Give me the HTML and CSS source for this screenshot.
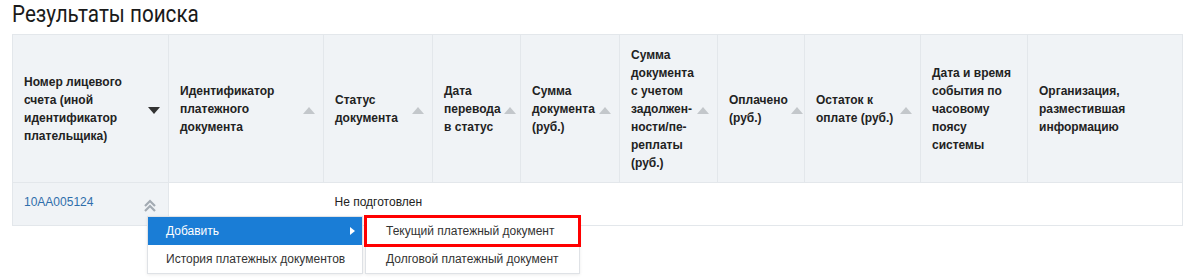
FILE: index.html
```html
<!DOCTYPE html>
<html lang="ru">
<head>
  <meta charset="UTF-8" />
  <title>Результаты поиска</title>
  <link rel="stylesheet" href="styles.css">
</head>
<body>
  <h1 class="title"><span>Результаты поиска</span></h1>

  <div class="results">
    <table class="grid">
      <colgroup>
        <col style="width:156px"><col style="width:155px"><col style="width:109px"><col style="width:88px"><col style="width:99px">
        <col style="width:98px"><col style="width:87px"><col style="width:116px"><col style="width:107px"><col style="width:155px">
      </colgroup>
      <thead>
        <tr>
          <th><div class="th"><span>Номер лицевого<br>счета (иной<br>идентификатор<br>плательщика)</span><i class="sort active"></i></div></th>
          <th><div class="th"><span>Идентификатор<br>платежного<br>документа</span><i class="sort"></i></div></th>
          <th><div class="th"><span>Статус<br>документа</span><i class="sort"></i></div></th>
          <th><div class="th"><span>Дата<br>перевода<br>в статус</span><i class="sort"></i></div></th>
          <th><div class="th"><span>Сумма<br>документа<br>(руб.)</span><i class="sort"></i></div></th>
          <th><div class="th"><span>Сумма<br>документа<br>с учетом<br>задолжен-<br>ности/пе-<br>реплаты<br>(руб.)</span><i class="sort"></i></div></th>
          <th><div class="th"><span>Оплачено<br>(руб.)</span><i class="sort"></i></div></th>
          <th><div class="th"><span>Остаток к<br>оплате (руб.)</span><i class="sort"></i></div></th>
          <th><div class="th"><span>Дата и время<br>события по<br>часовому<br>поясу<br>системы</span></div></th>
          <th><div class="th"><span>Организация,<br>разместившая<br>информацию</span></div></th>
        </tr>
      </thead>
      <tbody>
        <tr>
          <td class="fixed">
            <div class="acc">
              <a href="#" class="link">10AA005124</a>
              <svg class="toggle" width="14" height="13" viewBox="0 0 14 13">
                <path d="M2 7 L7 2 L12 7" fill="none" stroke="#a3abb3" stroke-width="2.2"/>
                <path d="M2 12 L7 7 L12 12" fill="none" stroke="#a3abb3" stroke-width="2.2"/>
              </svg>
            </div>
          </td>
          <td></td>
          <td class="nowrap">Не подготовлен</td>
          <td></td><td></td><td></td><td></td><td></td><td></td><td></td>
        </tr>
      </tbody>
    </table>

    <!-- контекстное меню строки -->
    <div class="menu">
      <ul class="menu-list">
        <li class="menu-item active">Добавить <i class="caret"></i></li>
        <li class="menu-item">История платежных документов</li>
      </ul>
      <ul class="menu-list sub">
        <li class="menu-item marked">Текущий платежный документ</li>
        <li class="menu-item">Долговой платежный документ</li>
      </ul>
    </div>
  </div>
</body>
</html>
```

FILE: styles.css
```css
html, body {
  min-height: 279px;
}
body {
  margin: 0;
  padding: 0 12px;
  background: #fff;
  color: #222;
  font-family: "Liberation Sans", Arial, sans-serif;
  font-size: 12px;
}
.title {
  margin: 0 0 6px;
  font-family: Roboto, "Liberation Sans", sans-serif;
  font-weight: 400;
  font-size: 24px;
  line-height: 28px;
  color: #1a1a1a;
}
.title span {
  display: inline-block;
  transform: scaleX(0.86);
  transform-origin: left center;
}
.results {
  position: relative;
  padding-bottom: 54px;
}
.grid {
  width: 1170px;
  table-layout: fixed;
  border-collapse: collapse;
  border: 1px solid #e3e7eb;
}
.grid th {
  height: 147px;
  padding: 0;
  background: #f0f3f6;
  border: 1px solid #e3e7eb;
  text-align: left;
  vertical-align: middle;
  font-weight: 700;
  line-height: 18px;
  color: #222;
}
.th {
  display: flex;
  align-items: center;
  padding: 0 8px 0 11px;
}
.th span {
  flex: 1;
}
.sort {
  width: 0;
  height: 0;
  margin-left: 3px;
  margin-top: 3px;
  border-left: 6px solid transparent;
  border-right: 6px solid transparent;
  border-bottom: 7px solid #c3c7cb;
}
.sort.active {
  border-bottom: none;
  border-top: 7px solid #333;
}
.grid td {
  height: 38px;
  padding: 0 11px 4px;
  border-bottom: 1px solid #e3e7eb;
  vertical-align: middle;
  color: #222;
}
.grid td.nowrap {
  white-space: nowrap;
  overflow: visible;
}
.grid td.fixed {
  background: #f0f3f6;
  border-right: 1px solid #e3e7eb;
}
.acc {
  display: flex;
  align-items: center;
  justify-content: space-between;
}
.link {
  color: #2f6eab;
  text-decoration: none;
}
.toggle {
  margin-top: 6px;
}
.menu {
  position: absolute;
  left: 135px;
  top: 182px;
  display: flex;
  align-items: flex-start;
}
.menu-list {
  list-style: none;
  margin: 0;
  padding: 0;
  width: 214px;
  background: #fff;
  border: 1px solid #dfe2e6;
  box-shadow: 0 1px 3px rgba(0, 0, 0, 0.08);
}
.menu-item {
  position: relative;
  height: 28px;
  line-height: 28px;
  padding-left: 18px;
  color: #333;
}
.menu-item.active {
  background: #1a7dd6;
  color: #fff;
}
.caret {
  position: absolute;
  right: 7px;
  top: 10px;
  width: 0;
  height: 0;
  border-top: 4px solid transparent;
  border-bottom: 4px solid transparent;
  border-left: 5px solid #fff;
}
.menu-list.sub {
  width: 213px;
  margin-left: 2px;
}
.sub .menu-item {
  padding-left: 20px;
}
.menu-item.marked {
  outline: 3px solid #f00;
  outline-offset: -1px;
}
```
